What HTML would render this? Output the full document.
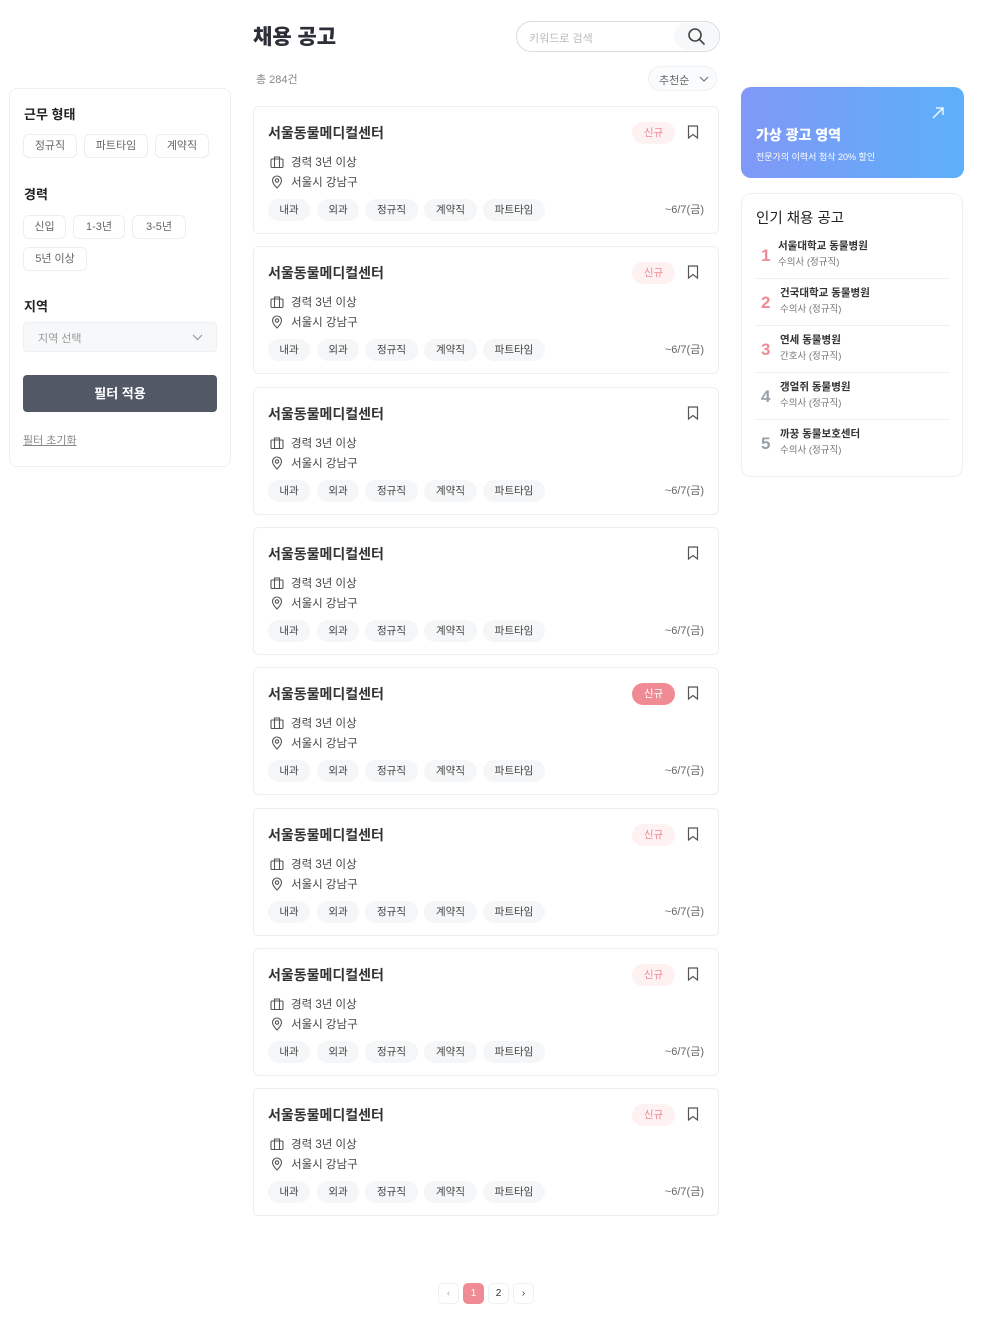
<!DOCTYPE html>
<html><head><meta charset="utf-8"><style>
*{box-sizing:border-box;margin:0;padding:0}
body{width:988px;height:1340px;background:#fff;font-family:"Liberation Sans","Noto Sans CJK KR",sans-serif;color:#333;position:relative;overflow:hidden}
.abs{position:absolute}
.side{left:9px;top:88px;width:222px;height:379px;border:1px solid #eef0f2;border-radius:8px}
.side h4{position:absolute;left:14px;font-size:13px;font-weight:700;color:#222}
.chip{position:absolute;height:24px;border:1px solid #eceef1;border-radius:6px;font-size:11px;color:#666;line-height:22px;text-align:center}
.card{position:absolute;left:253px;width:466px;height:128px;border:1px solid #eceef1;border-radius:6px}
.card .t{position:absolute;left:14px;top:16px;font-size:14px;font-weight:600;color:#333}
.card .l{position:absolute;left:37px;font-size:11.5px;color:#444}
.card .ic{position:absolute;left:16px}
.tag{position:absolute;top:92px;height:22px;border-radius:11px;background:#f5f6f7;font-size:10.5px;color:#444;line-height:22px;text-align:center}
.date{position:absolute;right:14px;top:94px;font-size:11px;color:#666}
.badge{position:absolute;left:378px;top:15px;width:43px;height:22px;border-radius:11px;background:#fdf1f2;color:#f08a95;font-size:10.5px;text-align:center;line-height:22px}
.badge.on{background:#f08a95;color:#fff}
.bm{position:absolute;left:433px;top:18px}
.pop{left:741px;top:193px;width:222px;height:284px;border:1px solid #eef0f2;border-radius:10px}
.pi{position:absolute;left:13px;width:195px;height:47px;border-bottom:1px solid #eef0f2}
.pi .n{position:absolute;left:6px;top:14px;font-size:17px;font-weight:700;color:#f08a95}
.pi .a{position:absolute;left:25px;top:6px;font-size:10.5px;font-weight:700;color:#333}
.pi .b{position:absolute;left:25px;top:22px;font-size:9.5px;color:#777}
.pg{position:absolute;top:1283px;width:21px;height:21px;border:1px solid #eef0f2;border-radius:5px;font-size:10px;text-align:center;line-height:19px;color:#333}
</style></head><body>
<div class="abs" style="left:253px;top:21px;font-size:21px;font-weight:800;color:#2c2f38">채용 공고</div>
<div class="abs" style="left:516px;top:21px;width:204px;height:31px;border:1px solid #d9dce1;border-radius:16px">
<span class="abs" style="left:12px;top:8px;font-size:11px;color:#bbb">키워드로 검색</span>
<div class="abs" style="right:1px;top:1px;width:44px;height:27px;border-radius:14px;background:#f7f8f9"></div>
<svg class="abs" style="right:13px;top:5px" width="19" height="19" viewBox="0 0 19 19" fill="none" stroke="#444" stroke-width="1.6"><circle cx="8" cy="8" r="6"/><path d="M12.5 12.5l5 5"/></svg>
</div>
<div class="abs" style="left:256px;top:71px;font-size:11px;color:#888">총 284건</div>
<div class="abs" style="left:648px;top:66px;width:69px;height:25px;border:1px solid #eef0f2;border-radius:13px;background:#fafbfc;font-size:11px;color:#666;padding:5px 0 0 10px">추천순<svg class="abs" style="left:50px;top:9px" width="10" height="6" viewBox="0 0 10 6" fill="none" stroke="#777" stroke-width="1.2"><path d="M1 1l4 4 4-4"/></svg></div>

<div class="abs side">
<h4 style="top:15px">근무 형태</h4>
<div class="chip" style="left:13px;top:45px;width:54px">정규직</div>
<div class="chip" style="left:74px;top:45px;width:64px">파트타임</div>
<div class="chip" style="left:145px;top:45px;width:54px">계약직</div>
<h4 style="top:95px">경력</h4>
<div class="chip" style="left:13px;top:126px;width:43px">신입</div>
<div class="chip" style="left:63px;top:126px;width:52px">1-3년</div>
<div class="chip" style="left:122px;top:126px;width:54px">3-5년</div>
<div class="chip" style="left:13px;top:158px;width:64px">5년 이상</div>
<h4 style="top:207px">지역</h4>
<div class="abs" style="left:13px;top:233px;width:194px;height:30px;border:1px solid #eef0f2;border-radius:4px;background:#f7f8f9;font-size:11px;color:#999;padding:7px 0 0 14px">지역 선택<svg class="abs" style="left:168px;top:11px" width="11" height="7" viewBox="0 0 11 7" fill="none" stroke="#999" stroke-width="1.2"><path d="M1 1l4.5 4.5L10 1"/></svg></div>
<div class="abs" style="left:13px;top:286px;width:194px;height:37px;border-radius:4px;background:#525866;color:#fff;font-size:13px;font-weight:700;text-align:center;line-height:37px">필터 적용</div>
<div class="abs" style="left:13px;top:343px;font-size:11px;color:#888;text-decoration:underline">필터 초기화</div>
</div>

<div class="abs" style="left:741px;top:87px;width:223px;height:91px;border-radius:10px;background:linear-gradient(90deg,#8098f7,#5cb0f9)">
<div class="abs" style="left:15px;top:38px;font-size:14px;font-weight:800;color:#fff">가상 광고 영역</div>
<div class="abs" style="left:15px;top:63px;font-size:9px;color:#fff">전문가의 이력서 첨삭 20% 할인</div>
<svg class="abs" style="left:190px;top:19px" width="14" height="14" viewBox="0 0 14 14" fill="none" stroke="#fff" stroke-width="1.3"><path d="M2 12L12 2M5 2h7v7"/></svg>
</div>

<div class="abs pop">
<div class="abs" style="left:14px;top:13px;font-size:14.5px;color:#222">인기 채용 공고</div>
<div class="pi" style="top:38px"><span class="n">1</span><span class="a" style="left:23px">서울대학교 동물병원</span><span class="b" style="left:23px">수의사 (정규직)</span></div>
<div class="pi" style="top:85px"><span class="n">2</span><span class="a">건국대학교 동물병원</span><span class="b">수의사 (정규직)</span></div>
<div class="pi" style="top:132px"><span class="n">3</span><span class="a">연세 동물병원</span><span class="b">간호사 (정규직)</span></div>
<div class="pi" style="top:179px"><span class="n" style="color:#9aa0aa">4</span><span class="a">갱얼쥐 동물병원</span><span class="b">수의사 (정규직)</span></div>
<div class="pi" style="top:226px;border:none"><span class="n" style="color:#9aa0aa">5</span><span class="a">까꿍 동물보호센터</span><span class="b">수의사 (정규직)</span></div>
</div>

<div id="cards"></div>
<script>
var tops=[106,246,387,527,667,808,948,1088],b=[1,1,0,0,2,1,1,1],h='';
tops.forEach(function(t,i){
h+='<div class="card" style="top:'+t+'px"><div class="t">서울동물메디컬센터</div>'+
(b[i]?'<div class="badge'+(b[i]==2?' on':'')+'">신규</div>':'')+
'<svg class="bm" width="12" height="14" viewBox="0 0 12 14" fill="none" stroke="#555" stroke-width="1.2"><path d="M1.5 1h9v12L6 9.5 1.5 13z"/></svg>'+
'<svg class="ic" style="top:49px" width="14" height="12" viewBox="0 0 14 12" fill="none" stroke="#555" stroke-width="1.1"><rect x="1" y="3" width="12" height="8.5" rx="1"/><path d="M4.5 3V1h5v2M4.5 3v8.5M9.5 3v8.5"/></svg>'+
'<div class="l" style="top:47px">경력 3년 이상</div>'+
'<svg class="ic" style="top:68px;left:17px" width="12" height="14" viewBox="0 0 12 14" fill="none" stroke="#555" stroke-width="1.1"><path d="M6 13s-4.5-4.5-4.5-7.5a4.5 4.5 0 019 0C10.5 8.5 6 13 6 13z"/><circle cx="6" cy="5.5" r="1.7"/></svg>'+
'<div class="l" style="top:67px">서울시 강남구</div>'+
'<div class="tag" style="left:14px;width:42px">내과</div><div class="tag" style="left:63px;width:42px">외과</div><div class="tag" style="left:111px;width:53px">정규직</div><div class="tag" style="left:170px;width:53px">계약직</div><div class="tag" style="left:229px;width:62px">파트타임</div>'+
'<div class="date">~6/7(금)</div></div>';});
document.getElementById('cards').innerHTML=h;
</script>

<div class="pg" style="left:438px;color:#aaa">‹</div>
<div class="pg" style="left:463px;background:#f08a95;border-color:#f08a95;color:#fff">1</div>
<div class="pg" style="left:488px">2</div>
<div class="pg" style="left:513px">›</div>
</body></html>
